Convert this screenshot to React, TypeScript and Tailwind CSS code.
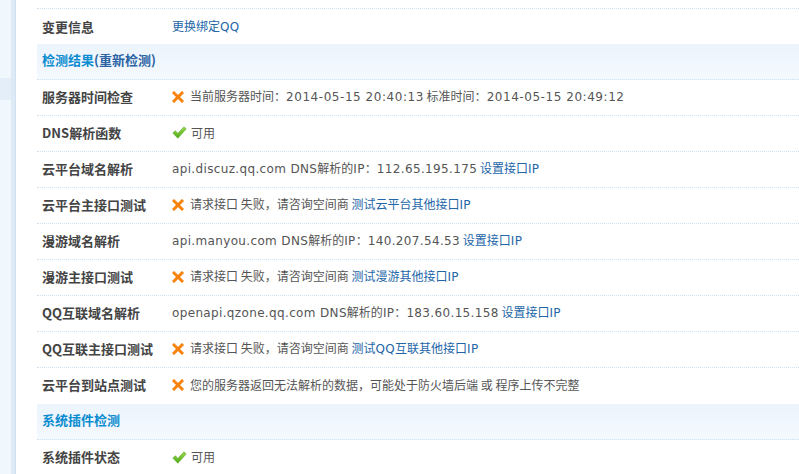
const cjk = "'Noto Sans CJK SC', sans-serif";
const latin = "'DejaVu Sans', Verdana, 'Noto Sans CJK SC', sans-serif";

function Cross() {
  return (
    <svg width="12" height="12" viewBox="0 0 12 12" className="mr-[6px] shrink-0">
      <path d="M2 2 L10 10 M10 2 L2 10" stroke="#f7830c" strokeWidth="3" strokeLinecap="square" />
    </svg>
  );
}

function Check() {
  return (
    <svg width="15" height="13" viewBox="0 0 15 13" className="mr-[4px] shrink-0">
      <defs>
        <linearGradient id="g" x1="0" y1="0" x2="0" y2="1">
          <stop offset="0" stopColor="#9ad94a" />
          <stop offset="1" stopColor="#4fac1d" />
        </linearGradient>
      </defs>
      <path d="M0.8 7 L3.5 4.8 L5.8 7.5 L12 0.8 L14.2 3 L5.8 12.2 Z" fill="url(#g)" stroke="#5aa821" strokeWidth="0.6" strokeLinejoin="round" />
    </svg>
  );
}

type Row =
  | { kind: "header"; title: string; link?: string }
  | { kind: "row"; label: React.ReactNode; value: React.ReactNode; last?: boolean };

const Link = ({ children }: { children: React.ReactNode }) => (
  <span className="text-[#2366a8]">{children}</span>
);

const Val = ({ children }: { children: React.ReactNode }) => (
  <span className="tracking-[0.35px]" style={{ fontFamily: latin }}>{children}</span>
);

// timestamps render a little wider in the original
const Time = ({ children }: { children: React.ReactNode }) => (
  <span className="tracking-[0.55px]" style={{ fontFamily: latin }}>{children}</span>
);

const rows: Row[] = [
  { kind: "row", label: "变更信息", value: <Link>更换绑定<Val>QQ</Val></Link>, last: true },
  { kind: "header", title: "检测结果", link: "(重新检测)" },
  {
    kind: "row",
    label: "服务器时间检查",
    value: (
      <>
        <Cross />
        <span>当前服务器时间：<Time>2014-05-15 20:40:13</Time> 标准时间：<Time>2014-05-15 20:49:12</Time></span>
      </>
    ),
  },
  { kind: "row", label: "DNS解析函数", value: (<><Check /><span>可用</span></>) },
  {
    kind: "row",
    label: "云平台域名解析",
    value: (
      <span><Val>api.discuz.qq.com DNS</Val>解析的<Val>IP</Val>：<Val>112.65.195.175</Val> <Link>设置接口<Val>IP</Val></Link></span>
    ),
  },
  {
    kind: "row",
    label: "云平台主接口测试",
    value: (<><Cross /><span>请求接口 失败，请咨询空间商 <Link>测试云平台其他接口<Val>IP</Val></Link></span></>),
  },
  {
    kind: "row",
    label: "漫游域名解析",
    value: (
      <span><Val>api.manyou.com DNS</Val>解析的<Val>IP</Val>：<Val>140.207.54.53</Val> <Link>设置接口<Val>IP</Val></Link></span>
    ),
  },
  {
    kind: "row",
    label: "漫游主接口测试",
    value: (<><Cross /><span>请求接口 失败，请咨询空间商 <Link>测试漫游其他接口<Val>IP</Val></Link></span></>),
  },
  {
    kind: "row",
    label: "QQ互联域名解析",
    value: (
      <span><Val>openapi.qzone.qq.com DNS</Val>解析的<Val>IP</Val>：<Val>183.60.15.158</Val> <Link>设置接口<Val>IP</Val></Link></span>
    ),
  },
  {
    kind: "row",
    label: "QQ互联主接口测试",
    value: (<><Cross /><span>请求接口 失败，请咨询空间商 <Link>测试<Val>QQ</Val>互联其他接口<Val>IP</Val></Link></span></>),
  },
  {
    kind: "row",
    label: "云平台到站点测试",
    value: (<><Cross /><span>您的服务器返回无法解析的数据，可能处于防火墙后端 或 程序上传不完整</span></>),
    last: true,
  },
  { kind: "header", title: "系统插件检测" },
  { kind: "row", label: "系统插件状态", value: (<><Check /><span>可用</span></>), last: true },
];

export default function App() {
  return (
    <div className="flex h-[474px] w-[799px] overflow-hidden bg-white" style={{ fontFamily: cjk }}>
      <div className="flex shrink-0">
        <div className="w-[11px] bg-[#f1f8fd]">
          <div className="mt-[78px] h-[22px] bg-[#e3eef9]" />
        </div>
        <div className="w-[5px] bg-[#dde9f5] border-r border-[#cfe0f0]" />
      </div>
      <div className="flex-1 pl-[21px] pt-[8px]">
        {rows.map((r, i) =>
          r.kind === "header" ? (
            <div
              key={i}
              className="flex h-[36px] items-center border-b border-dotted border-[#cde4f4] bg-gradient-to-b from-[#ecf4fc] to-[#f4f9fe] pb-[3px] pl-[5px] text-[13px] font-bold text-[#0c8cd0]"
            >
              {r.title}
              {r.link && <span className="text-[#2a62a3]">{r.link}</span>}
            </div>
          ) : (
            <div
              key={i}
              className={`flex h-[36px] items-center ${i === 0 ? "border-t pb-[0px]" : "pb-[2px]"} ${r.last ? "" : "border-b"} border-dotted border-[#cde4f4]`}
            >
              <div className="w-[135px] shrink-0 pl-[5px] text-[13px] font-bold text-[#444]">{r.label}</div>
              <div className="flex items-center text-[12px] text-[#555] whitespace-nowrap">{r.value}</div>
            </div>
          )
        )}
      </div>
    </div>
  );
}
